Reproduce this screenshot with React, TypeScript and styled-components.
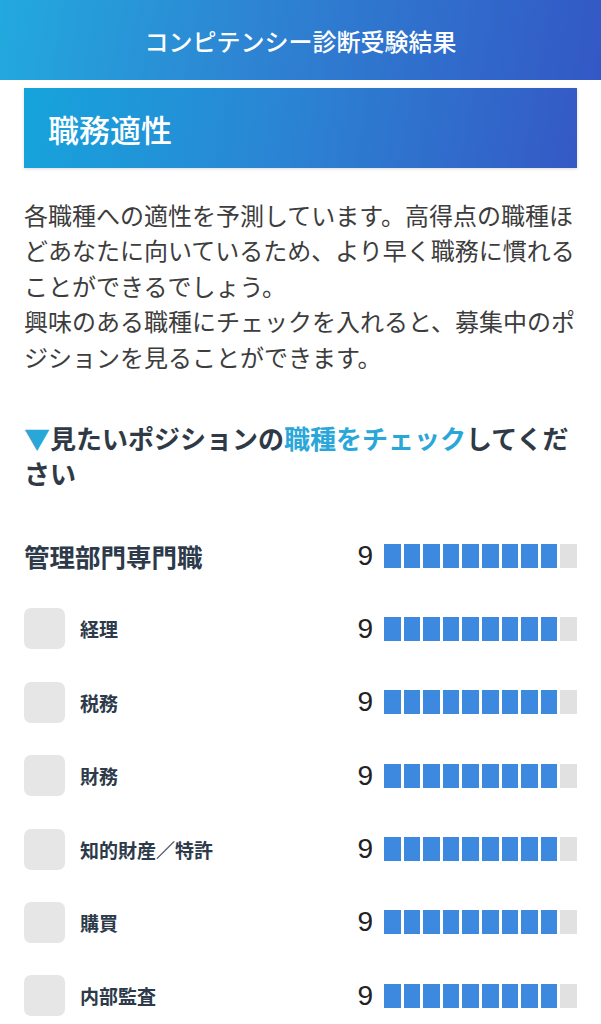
import React from 'react';
import styled, { createGlobalStyle } from 'styled-components';

const GlobalStyle = createGlobalStyle`
  body {
    margin: 0;
    background: #ffffff;
    font-family: "Noto Sans CJK JP", "Noto Sans", sans-serif;
  }
`;

const Page = styled.div`
  width: 601px;
  min-height: 1024px;
  background: #ffffff;
  overflow: hidden;
`;

const TopBar = styled.header`
  height: 80px;
  display: flex;
  align-items: center;
  justify-content: center;
  background: linear-gradient(100deg, #22a9de 0%, #2d86d3 40%, #3358c5 100%);
  color: #ffffff;
  font-size: 24px;
  font-weight: 500;
  letter-spacing: 0;
`;

const Content = styled.main`
  padding: 8px 24px 0 24px;
`;

const SectionBox = styled.div`
  height: 80px;
  display: flex;
  align-items: center;
  padding-left: 24px;
  background: linear-gradient(100deg, #16a4dc 0%, #2a86d4 45%, #3559c5 100%);
  box-shadow: 0 1px 3px rgba(0, 0, 0, 0.15);
  color: #ffffff;
  font-size: 31px;
  font-weight: 500;
`;

const Lead = styled.p`
  margin: 29px 0 0;
  font-size: 24px;
  line-height: 35.4px;
  color: #3d3d3d;
`;

const Prompt = styled.h3`
  margin: 46px 0 0;
  font-size: 26px;
  line-height: 35px;
  font-weight: 700;
  color: #2f3a46;
`;

const Accent = styled.span`
  color: #2aa7d9;
`;

const List = styled.div`
  margin-top: 45px;
  display: flex;
  flex-direction: column;
  gap: 32.4px;
`;

const Row = styled.div`
  height: 41px;
  display: flex;
  align-items: center;
`;

const Category = styled.div`
  flex: 1;
  font-size: 25.5px;
  font-weight: 700;
  color: #2d3a4a;
`;

const Check = styled.span`
  width: 41px;
  height: 41px;
  border-radius: 7px;
  background: #e6e6e6;
  flex-shrink: 0;
`;

const Label = styled.div`
  flex: 1;
  margin-left: 15px;
  font-size: 19px;
  font-weight: 700;
  color: #2d3a4a;
`;

const Score = styled.span`
  font-family: "Liberation Sans", Arial, sans-serif;
  font-size: 28px;
  color: #222222;
  margin-right: 11px;
  line-height: 1;
`;

const Bar = styled.div`
  width: 193px;
  height: 24px;
  display: flex;
  gap: 3px;
`;

const Segment = styled.span<{ $on: boolean }>`
  flex: 1;
  background: ${(p) => (p.$on ? '#3d89e0' : '#e1e1e1')};
`;

const ScoreBar: React.FC<{ score: number }> = ({ score }) => (
  <>
    <Score>{score}</Score>
    <Bar>
      {Array.from({ length: 10 }).map((_, i) => (
        <Segment key={i} $on={i < score} />
      ))}
    </Bar>
  </>
);

const jobs = [
  { name: '経理', score: 9 },
  { name: '税務', score: 9 },
  { name: '財務', score: 9 },
  { name: '知的財産／特許', score: 9 },
  { name: '購買', score: 9 },
  { name: '内部監査', score: 9 },
];

const App: React.FC = () => (
  <Page>
    <GlobalStyle />
    <TopBar>コンピテンシー診断受験結果</TopBar>
    <Content>
      <SectionBox>職務適性</SectionBox>
      <Lead>
        各職種への適性を予測しています。高得点の職種ほどあなたに向いているため、より早く職務に慣れることができるでしょう。
        <br />
        興味のある職種にチェックを入れると、募集中のポジションを見ることができます。
      </Lead>
      <Prompt>
        <Accent>▼</Accent>見たいポジションの<Accent>職種をチェック</Accent>してください
      </Prompt>
      <List>
        <Row>
          <Category>管理部門専門職</Category>
          <ScoreBar score={9} />
        </Row>
        {jobs.map((job) => (
          <Row key={job.name}>
            <Check />
            <Label>{job.name}</Label>
            <ScoreBar score={job.score} />
          </Row>
        ))}
      </List>
    </Content>
  </Page>
);

export default App;
